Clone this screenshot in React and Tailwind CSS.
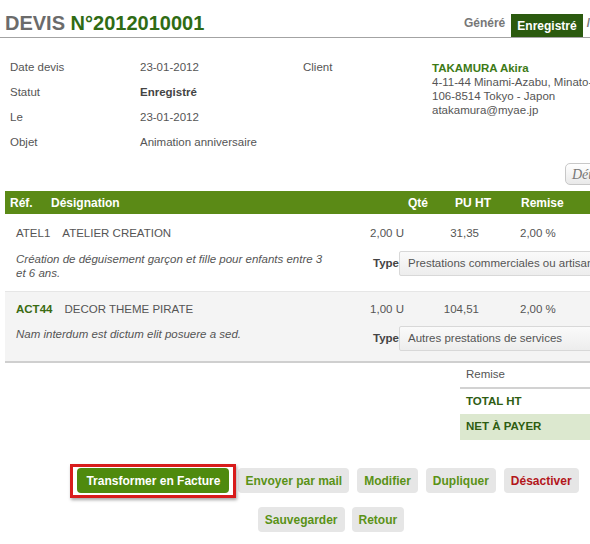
const lines = [
  {
    ref: "ATEL1",
    name: "ATELIER CREATION",
    qty: "2,00 U",
    pu: "31,35",
    remise: "2,00 %",
    desc: "Création de déguisement garçon et fille pour enfants entre 3 et 6 ans.",
    type: "Prestations commerciales ou artisanales",
    highlight: false,
  },
  {
    ref: "ACT44",
    name: "DECOR THEME PIRATE",
    qty: "1,00 U",
    pu: "104,51",
    remise: "2,00 %",
    desc: "Nam interdum est dictum elit posuere a sed.",
    type: "Autres prestations de services",
    highlight: true,
  },
];

const infos = [
  ["Date devis", "23-01-2012"],
  ["Statut", "Enregistré"],
  ["Le", "23-01-2012"],
  ["Objet", "Animation anniversaire"],
];

function Btn({ children, danger }) {
  return (
    <button
      className={
        "block h-[25px] px-[7px] rounded-[4px] bg-[#e6e6e6] text-[12px] font-bold leading-none " +
        (danger ? "text-[#b3161b]" : "text-[#5a9216]")
      }
    >
      {children}
    </button>
  );
}

export default function App() {
  return (
    <div className="w-[590px] h-[544px] overflow-hidden bg-white font-['Liberation_Sans',Arial,sans-serif] text-[11.5px] text-[#555]">
      <div className="w-[656px]">
        {/* title + status steps */}
        <div className="flex items-end justify-between border-b border-[#a3a3a3] pl-[5px]">
          <h1 className="text-[20px] font-bold leading-none pt-[13px] pb-[4px]">
            <span className="text-[#6b6b6b]">DEVIS </span>
            <span className="text-[#2f6b14]">N°2012010001</span>
          </h1>
          <div className="flex items-end text-[12px] font-bold mr-[66px]">
            <span className="text-[#777] pb-[5px] mr-[6px]">Généré</span>
            <span className="bg-[#2b5a0f] text-white h-[23px] px-[6px] flex items-center">Enregistré</span>
            <span className="text-[#777] pb-[5px] ml-[4px]">/</span>
          </div>
        </div>

        {/* quote details */}
        <div className="flex mt-[17px]">
          <div className="w-[298px] pl-[10px]">
            {infos.map(([k, v]) => (
              <div key={k} className="flex h-[25px] items-center">
                <div className="w-[130px]">{k}</div>
                <div className={k === "Statut" ? "font-bold text-[#444]" : ""}>{v}</div>
              </div>
            ))}
          </div>
          <div className="flex pl-[5px]">
            <div className="w-[129px] h-[25px] flex items-center">Client</div>
            <div className="pt-[5.5px] leading-[14px]">
              <div className="font-bold text-[#3d7a16]">TAKAMURA Akira</div>
              <div className="whitespace-nowrap">4-11-44 Minami-Azabu, Minato-ku</div>
              <div>106-8514 Tokyo - Japon</div>
              <div>atakamura@myae.jp</div>
            </div>
          </div>
        </div>

        <div className="flex justify-end mt-[8px] pr-[14px]">
          <button className="block h-[22px] w-[77px] pl-[6px] text-left rounded-[5px] border border-[#c8c8c8] bg-gradient-to-b from-white to-[#e9e9e9] italic text-[14px] text-[#777] font-['Liberation_Serif',serif]">
            Détails
          </button>
        </div>

        {/* lines */}
        <div className="ml-[5px] mt-[6px]">
          <div className="flex h-[23px] items-center bg-[#5b8a16] text-white text-[12px] font-bold pl-[5px]">
            <div className="w-[41px]">Réf.</div>
            <div className="w-[357px]">Désignation</div>
            <div className="w-[47px]">Qté</div>
            <div className="w-[66px]">PU HT</div>
            <div>Remise</div>
          </div>

          {lines.map((l) => (
            <div
              key={l.ref}
              className={
                l.highlight
                  ? "h-[71px] bg-[#f4f4f4] border-b-2 border-[#cfcfcf] pl-[11px] pt-[10px]"
                  : "h-[78px] border-b border-[#e6e6e6] pl-[11px] pt-[12px]"
              }
            >
              <div className="flex leading-[14px]">
                <div className="w-[324px] flex gap-[12px]">
                  <span className={l.highlight ? "font-bold text-[#3a6b12]" : ""}>{l.ref}</span>
                  <span>{l.name}</span>
                </div>
                <div className="w-[64px] text-right">{l.qty}</div>
                <div className="w-[75px] text-right">{l.pu}</div>
                <div className="pl-[41px]">{l.remise}</div>
              </div>
              <div className={"flex " + (l.highlight ? "mt-[10px]" : "mt-[11px]")}>
                <div className="w-[357px] pt-[1px]">
                  <p className="w-[312px] italic leading-[14px]">{l.desc}</p>
                </div>
                <div className="w-[26px] h-[25px] flex items-center font-bold text-[#444]">Type</div>
                <div className="w-[240px] h-[25px] flex items-center pl-[8px] rounded-[2px] border border-[#d8d8d8] bg-gradient-to-b from-[#fafafa] to-[#ededed] whitespace-nowrap">
                  {l.type}
                </div>
              </div>
            </div>
          ))}
        </div>

        {/* totals */}
        <div className="ml-[460px] w-[196px]">
          <div className="h-[26px] flex items-center pl-[6px] border-b-2 border-[#d2d2d2]">Remise</div>
          <div className="h-[25px] flex items-center pl-[6px] font-bold text-[#2e5d12]">TOTAL HT</div>
          <div className="h-[26px] flex items-center pl-[6px] font-bold text-[#2e5d12] bg-[#dce8cf]">NET À PAYER</div>
        </div>

        {/* actions */}
        <div className="flex flex-col items-center gap-[14px] mt-[28px]">
          <div className="flex items-start gap-[8px]">
            <div className="relative mr-[1px]">
              <button className="block h-[25px] px-[9px] rounded-[4px] bg-[#4f8a0e] text-white text-[12px] font-bold leading-none">
                Transformer en Facture
              </button>
              <span className="absolute -left-[7px] -right-[7px] -top-[4px] -bottom-[5px] border-[3px] border-[#d81c1c] shadow-[1px_2px_3px_rgba(0,0,0,0.35)]" />
            </div>
            <Btn>Envoyer par mail</Btn>
            <Btn>Modifier</Btn>
            <Btn>Dupliquer</Btn>
            <Btn danger>Désactiver</Btn>
          </div>
          <div className="flex items-start gap-[7px] ml-[6px]">
            <Btn>Sauvegarder</Btn>
            <Btn>Retour</Btn>
          </div>
        </div>
      </div>
    </div>
  );
}
